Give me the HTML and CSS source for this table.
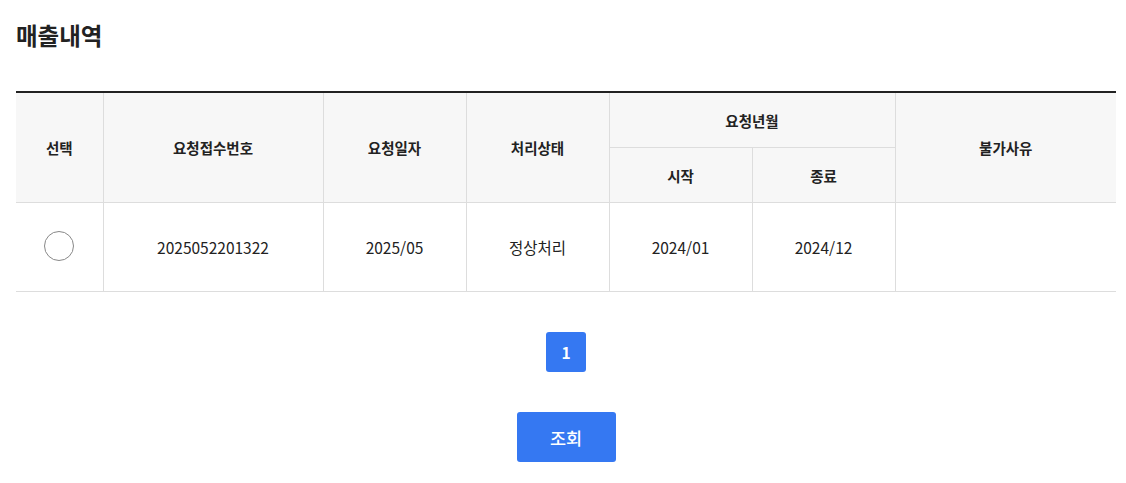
FILE: index.html
```html
<!DOCTYPE html>
<html lang="ko">
<head>
  <meta charset="UTF-8" />
  <meta name="viewport" content="width=device-width, initial-scale=1.0" />
  <title>매출내역</title>
  <link rel="stylesheet" href="styles.css">
</head>
<body>
  <div class="container">
    <h2 class="titulo">매출내역</h2>

    <table class="tabela">
      <colgroup>
        <col style="width:87px">
        <col style="width:220px">
        <col style="width:143px">
        <col style="width:143px">
        <col style="width:143px">
        <col style="width:143px">
        <col>
      </colgroup>
      <thead>
        <tr>
          <th rowspan="2">선택</th>
          <th rowspan="2">요청접수번호</th>
          <th rowspan="2">요청일자</th>
          <th rowspan="2">처리상태</th>
          <th colspan="2">요청년월</th>
          <th rowspan="2">불가사유</th>
        </tr>
        <tr>
          <th>시작</th>
          <th>종료</th>
        </tr>
      </thead>
      <tbody>
        <tr>
          <td><span class="radio"></span></td>
          <td>2025052201322</td>
          <td>2025/05</td>
          <td>정상처리</td>
          <td>2024/01</td>
          <td>2024/12</td>
          <td></td>
        </tr>
      </tbody>
    </table>

    <div class="paginacao">
      <a class="pagina ativa">1</a>
    </div>

    <div class="acoes">
      <button class="botao">조회</button>
    </div>
  </div>
</body>
</html>
```

FILE: styles.css
```css
body {
  margin: 0;
  background: #fff;
  color: #222;
  font-family: "Noto Sans CJK KR", "Noto Sans", sans-serif;
}

.container {
  width: 1100px;
  padding: 16px;
}

.titulo {
  margin: 0;
  font-size: 23.5px;
  font-weight: 700;
  line-height: 38px;
  color: #222;
}

.tabela {
  width: 1100px;
  margin-top: 37px;
  border-collapse: collapse;
  table-layout: fixed;
  border-top: 2px solid #222;
}

.tabela th,
.tabela td {
  border: 1px solid #ddd;
  text-align: center;
  vertical-align: middle;
  padding: 0;
}

.tabela tr > :first-child {
  border-left: none;
}

.tabela tr > :last-child {
  border-right: none;
}

.tabela thead tr:first-child th:nth-child(5) {
  border-right: 1px solid #ddd;
}

.tabela thead tr:nth-child(2) th:last-child {
  border-right: 1px solid #ddd;
}

.tabela thead tr:nth-child(2) th:first-child {
  border-left: 1px solid #ddd;
}

.tabela th {
  background: #f7f7f7;
  font-size: 14.5px;
  font-weight: 700;
  height: 54px;
  color: #222;
}

.tabela td {
  font-size: 15.5px;
  height: 88px;
  color: #222;
}

.radio {
  display: inline-block;
  width: 28px;
  height: 28px;
  border: 1px solid #888;
  border-radius: 50%;
  vertical-align: middle;
  margin-top: -2px;
}

.paginacao {
  display: flex;
  justify-content: center;
  margin-top: 40px;
}

.pagina {
  display: flex;
  align-items: center;
  justify-content: center;
  width: 40px;
  height: 40px;
  border-radius: 3px;
  font-size: 15.5px;
  font-weight: 700;
}

.pagina.ativa {
  background: #3578f2;
  color: #fff;
}

.acoes {
  display: flex;
  justify-content: center;
  margin-top: 40px;
}

.botao {
  width: 99px;
  height: 50px;
  border: none;
  border-radius: 3px;
  background: #3578f2;
  color: #fff;
  font-family: "Noto Sans CJK KR", "Noto Sans", sans-serif;
  font-size: 17.5px;
  font-weight: 500;
  cursor: pointer;
}
```
